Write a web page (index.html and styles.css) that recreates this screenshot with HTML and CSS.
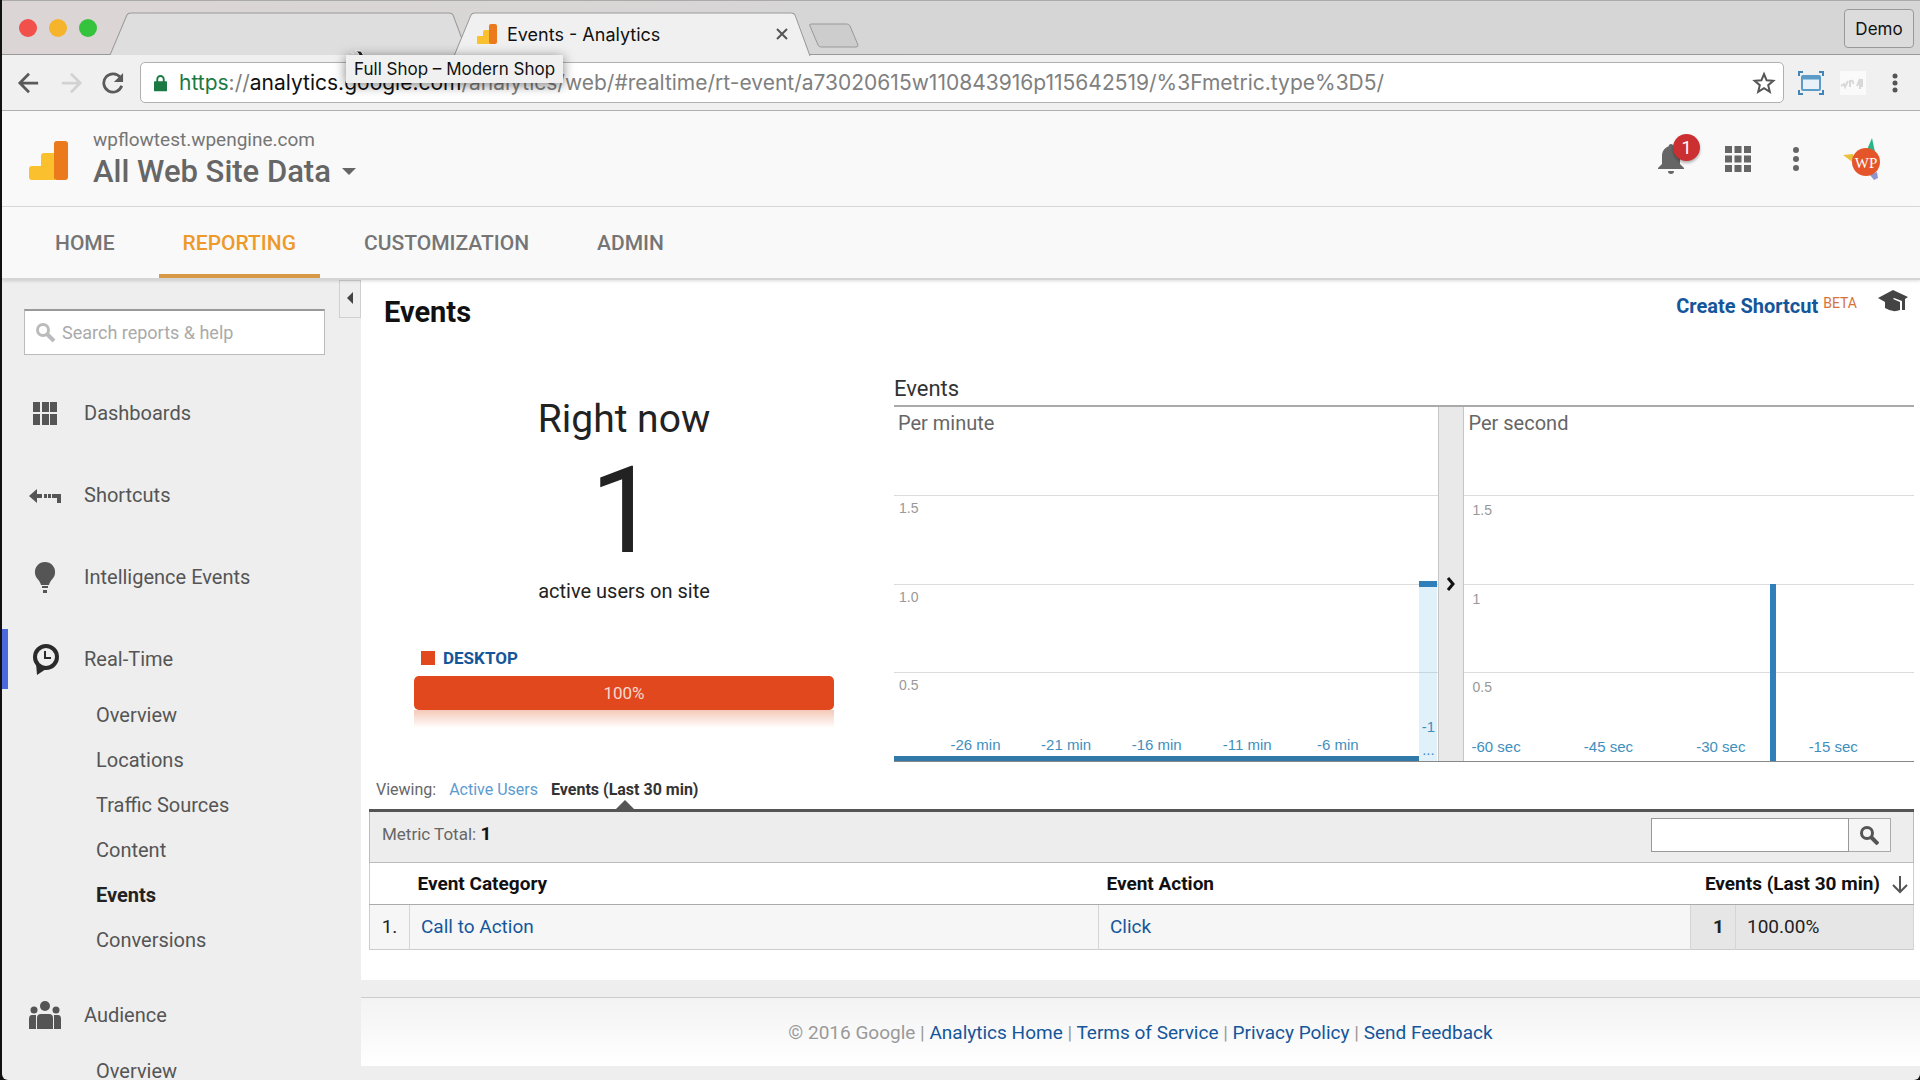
FILE: index.html
```html
<!DOCTYPE html>
<html lang="en">
<head>
  <meta charset="UTF-8">
  <meta name="viewport" content="width=device-width, initial-scale=1.0">
  <title>Events - Analytics</title>
  <link rel="stylesheet" href="styles.css">
</head>
<body>
  <div class="window">

    <!-- Tab Strip -->
    <div class="tab-strip">
      <div class="lights">
        <span class="light red"></span>
        <span class="light yellow"></span>
        <span class="light green"></span>
      </div>
      <div class="tab tab-back">
        <svg class="tab-shape" viewBox="0 0 360 42" preserveAspectRatio="none"><path d="M0 42 L17 3 Q18 1 21 1 H341 Q344 1 345 3 L360 42" fill="#dedede" stroke="#999"/></svg>
      </div>
      <div class="tab tab-active">
        <svg class="tab-shape" viewBox="0 0 360 42" preserveAspectRatio="none"><path d="M0 42 L17 3 Q18 1 21 1 H339 Q342 1 343 3 L358 42" fill="#f0f0f0" stroke="#999"/></svg>
        <svg class="tab-icon" viewBox="0 0 20 20"><path d="M0 13a1 1 0 0 1 1-1h5V8a2 2 0 0 1 2-2h5v14H1a1 1 0 0 1-1-1z" fill="#fbc02d"/><rect x="12" width="8" height="20" rx="2" fill="#ea7a1c"/></svg>
        <span class="tab-title">Events - Analytics</span>
        <button class="tab-close" aria-label="Close tab">
          <svg viewBox="0 0 12 12" width="12" height="12"><path d="M1 1l10 10M11 1L1 11" stroke="#555" stroke-width="2"/></svg>
        </button>
      </div>
      <button class="new-tab" aria-label="New tab">
        <svg viewBox="0 0 50 25" width="50" height="25"><path d="M2 1H38Q40 1 41 3L49 22Q49 24 47 24H12Q10 24 9 22L1 3Q0 1 2 1z" fill="#cdcdcd" stroke="#999"/></svg>
      </button>
      <button class="profile">Demo</button>
      <svg class="cursor" viewBox="0 0 16 8" width="16" height="8"><path d="M1 2l3 2M5 1l3 2 2 4 4-1-3-5z" fill="#222" stroke="#fff"/></svg>
      <div class="tooltip">Full Shop – Modern Shop</div>
    </div>

    <!-- Toolbar -->
    <div class="toolbar">
      <button class="tool" aria-label="Back"><svg viewBox="0 0 24 24"><path d="M22 12H3M12 2L2 12l10 10" fill="none" stroke="#5a5a5a" stroke-width="3"/></svg></button>
      <button class="tool" aria-label="Forward"><svg viewBox="0 0 24 24"><path d="M2 12h19M12 2l10 10-10 10" fill="none" stroke="#d2d2d2" stroke-width="3"/></svg></button>
      <button class="tool" aria-label="Reload"><svg viewBox="0 0 24 24"><path d="M20 6A10 10 0 1 0 21.500 15" fill="none" stroke="#5a5a5a" stroke-width="3"/><path d="M23 1v10H13z" fill="#5a5a5a"/></svg></button>
      <div class="omnibox">
        <svg class="lock" viewBox="0 0 14 18"><path d="M3.500 8V5a3.500 3.500 0 0 1 7 0v3" fill="none" stroke="#1b7a43" stroke-width="2"/><rect y="7" width="14" height="11" rx="1" fill="#1b7a43"/></svg>
        <div class="url" role="textbox" aria-label="Address" contenteditable="true" spellcheck="false"><span class="scheme">https</span>://<span class="host">analytics.google.com</span>/analytics/web/#realtime/rt-event/a73020615w110843916p115642519/%3Fmetric.type%3D5/</div>
        <button class="star" aria-label="Bookmark"><svg viewBox="0 0 24 24" width="24" height="24"><path d="M12 3l2.600 6.300 6.700.5-5.100 4.400 1.600 6.600L12 17.200l-5.800 3.600 1.600-6.600-5.100-4.400 6.700-.5z" fill="none" stroke="#555" stroke-width="2"/></svg></button>
      </div>
      <button class="ext" aria-label="Capture"><svg viewBox="0 0 26 24"><rect x="4" y="5" width="18" height="14" rx="1" fill="#e8f1f8" stroke="#5b9bc8" stroke-width="2"/><path d="M4 7h18" stroke="#5b9bc8" stroke-width="3"/><path d="M1 5V1h4M21 1h4v4M25 19v4h-4M5 23H1v-4" fill="none" stroke="#4585b5" stroke-width="2"/></svg></button>
      <button class="ext" aria-label="Extension"><svg viewBox="0 0 26 24"><rect width="26" height="24" fill="#fafafa"/><path d="M1 15l3-2 1 3 3-6M10 16v-6q4-1 3 3M17 15l3-7v10M22 8v8" fill="none" stroke="#d8d8d8" stroke-width="2"/></svg></button>
      <button class="menu" aria-label="Menu"><svg viewBox="0 0 6 20" width="6" height="20"><g fill="#555"><circle cx="3" cy="3" r="2.500"/><circle cx="3" cy="10" r="2.500"/><circle cx="3" cy="17" r="2.500"/></g></svg></button>
    </div>

    <!-- Analytics Header -->
    <header class="header">
      <svg class="logo" viewBox="0 0 39 39"><path d="M0 28a3 3 0 0 1 3-3h9V15a3 3 0 0 1 3-3h11v27H3a3 3 0 0 1-3-3z" fill="#fbc02d"/><rect x="25" width="14" height="39" rx="3" fill="#ea7a1c"/></svg>
      <div class="property">
        <div class="property-site">wpflowtest.wpengine.com</div>
        <button class="property-view">All Web Site Data <span class="caret"></span></button>
      </div>
      <div class="header-icons">
        <button class="bell" aria-label="Notifications">
          <svg viewBox="0 0 26 30" width="26" height="30"><path d="M13 0c1.500 0 2.300 1 2.300 2.300C20 4 22 8 22 12v8l4 4v1H0v-1l4-4v-8c0-4 2-8 6.700-9.700C10.700 1 11.500 0 13 0zM10 27h6a3 3 0 0 1-6 0z" fill="#666"/></svg>
          <span class="badge">1</span>
        </button>
        <button aria-label="Apps"><svg viewBox="0 0 26 26" width="26" height="26"><path d="M0 0h7v7H0zM9.500 0h7v7h-7zM19 0h7v7h-7zM0 9.500h7v7H0zM9.500 9.500h7v7h-7zM19 9.500h7v7h-7zM0 19h7v7H0zM9.500 19h7v7h-7zM19 19h7v7h-7z" fill="#666"/></svg></button>
        <button aria-label="More"><svg viewBox="0 0 8 26" width="8" height="26"><g fill="#666"><circle cx="4" cy="4" r="3"/><circle cx="4" cy="13" r="3"/><circle cx="4" cy="22" r="3"/></g></svg></button>
        <button class="avatar" aria-label="Account">
          <svg viewBox="0 0 40 44" width="40" height="44"><path d="M31 1l3 14h-9z" fill="#2bb58b"/><path d="M2 18l10-1 2 10z" fill="#e9c13c"/><path d="M29 38l7-3 1 6-4 2z" fill="#8c97cf"/><circle cx="25" cy="25" r="14" fill="#e5552a"/><text x="25" y="31" text-anchor="middle" class="avatar-text">WP</text></svg>
        </button>
      </div>
    </header>

    <!-- Main Navigation -->
    <nav class="main-nav">
      <a href="#">HOME</a>
      <a href="#" class="active">REPORTING</a>
      <a href="#">CUSTOMIZATION</a>
      <a href="#">ADMIN</a>
    </nav>

    <div class="body">
      <!-- Sidebar -->
      <aside class="sidebar">
        <button class="collapse" aria-label="Collapse"><span></span></button>
        <label class="side-search">
          <svg viewBox="0 0 20 20" width="20" height="20"><circle cx="7" cy="7" r="5.500" fill="none" stroke="#bbb" stroke-width="3"/><path d="M11 11l7 7" stroke="#bbb" stroke-width="4"/></svg>
          <input type="text" placeholder="Search reports &amp; help" aria-label="Search reports &amp; help">
        </label>
        <a href="#" class="side-item">
          <svg viewBox="0 0 32 32"><path d="M4 5h7v10H4zM13 5h7v10h-7zM21 5h7v10h-7zM4 17h7v11H4zM13 17h7v11h-7zM21 17h7v11h-7z" fill="#555"/></svg>
          Dashboards
        </a>
        <a href="#" class="side-item">
          <svg viewBox="0 0 32 32"><path d="M0 17l8-7v5h5v4H8v5zM15 15h3v4h-3zM19 15h3v4h-3zM23 15h9v9h-4v-5h-5z" fill="#555"/></svg>
          Shortcuts
        </a>
        <a href="#" class="side-item">
          <svg viewBox="0 0 32 32"><path d="M16 1a10 10 0 0 1 10 11c0 5-5 7-6 12h-8c-1-5-6-7-6-12A10 10 0 0 1 16 1zM13 25h6v2h-6zM14 29h4v3h-4z" fill="#555"/></svg>
          Intelligence Events
        </a>
        <a href="#" class="side-item current">
          <svg viewBox="0 0 32 32"><circle cx="17" cy="14" r="11" fill="none" stroke="#2a2a2a" stroke-width="4"/><path d="M7 20l1 12 9-6z" fill="#2a2a2a"/><path d="M16 8v7h6" fill="none" stroke="#2a2a2a" stroke-width="2"/></svg>
          Real-Time
        </a>
        <div class="side-sub">
          <a href="#">Overview</a>
          <a href="#">Locations</a>
          <a href="#">Traffic Sources</a>
          <a href="#">Content</a>
          <a href="#" class="selected">Events</a>
          <a href="#">Conversions</a>
        </div>
        <a href="#" class="side-item">
          <svg viewBox="0 0 32 32"><g fill="#555"><circle cx="16" cy="7" r="5"/><circle cx="5" cy="11" r="3.500"/><circle cx="27" cy="11" r="3.500"/><path d="M8 30V19q0-4 4-4h8q4 0 4 4v11zM0 30V20q0-4 3-4h4v14zM25 30V16h4q3 0 3 4v10z"/></g></svg>
          Audience
        </a>
        <div class="side-sub">
          <a href="#">Overview</a>
        </div>
      </aside>

      <!-- Report -->
      <main class="main">
        <div class="report">
          <div class="report-head">
            <h1>Events</h1>
            <div class="report-tools">
              <a href="#" class="shortcut">Create Shortcut</a>
              <span class="beta">BETA</span>
              <svg class="cap" viewBox="0 0 30 22" width="30" height="22"><path d="M0 8L15 0l15 7-3 2v11h-3v-9l-8-3-1 1 7 3v8q-7 3-15-2v-6z" fill="#444"/></svg>
            </div>
          </div>

          <div class="overview">
            <div class="right-now">
              <h2>Right now</h2>
              <div class="count">1</div>
              <p>active users on site</p>
              <div class="legend"><span class="swatch"></span><a href="#">DESKTOP</a></div>
              <div class="device-bar">100%</div>
              <div class="reflection"></div>
            </div>

            <div class="charts">
              <h3>Events</h3>
              <div class="chart-row">
                <div class="chart">
                  <div class="band"><span class="chart-name">Per minute</span></div>
                  <div class="band"><span class="tick">1.5</span></div>
                  <div class="band"><span class="tick">1.0</span></div>
                  <div class="band"><span class="tick">0.5</span></div>
                  <div class="minutes">
                    <div class="zero-line"></div>
                    <div class="minute-bar"><span>-1</span><span>...</span></div>
                    <span class="min-label">-26 min</span>
                    <span class="min-label">-21 min</span>
                    <span class="min-label">-16 min</span>
                    <span class="min-label">-11 min</span>
                    <span class="min-label">-6 min</span>
                  </div>
                </div>
                <button class="divider" aria-label="Expand">
                  <svg viewBox="0 0 10 14" width="10" height="14"><path d="M2 1l5 6-5 6" fill="none" stroke="#111" stroke-width="3"/></svg>
                </button>
                <div class="chart seconds-chart">
                  <div class="band"><span class="chart-name">Per second</span></div>
                  <div class="band"><span class="tick">1.5</span></div>
                  <div class="band"><span class="tick">1</span></div>
                  <div class="band"><span class="tick">0.5</span></div>
                  <div class="seconds">
                    <span>-60 sec</span>
                    <span>-45 sec</span>
                    <span>-30 sec</span>
                    <span>-15 sec</span>
                  </div>
                  <div class="second-bar" style="left: 68%; height: 50%"></div>
                </div>
              </div>
            </div>
          </div>

          <div class="viewing">
            <span>Viewing:</span>
            <a href="#">Active Users</a>
            <strong>Events (Last 30 min)</strong>
          </div>
          <div class="metric">
            <div class="metric-total">Metric Total: <strong>1</strong></div>
            <div class="metric-search">
              <input type="text" aria-label="Search table">
              <button aria-label="Search"><svg viewBox="0 0 20 20" width="20" height="20"><circle cx="8" cy="8" r="5.500" fill="none" stroke="#555" stroke-width="3"/><path d="M12 12l7 7" stroke="#555" stroke-width="4"/></svg></button>
            </div>
          </div>
          <table class="data">
            <colgroup><col class="c-num"><col class="c-cat"><col class="c-act"><col class="c-val"><col class="c-pct"></colgroup>
            <thead>
              <tr>
                <th></th>
                <th>Event Category</th>
                <th>Event Action</th>
                <th colspan="2" class="sorted">Events (Last 30 min)<svg viewBox="0 0 16 18" width="16" height="18"><path d="M8 0v16M1 9l7 7 7-7" fill="none" stroke="#555" stroke-width="2"/></svg></th>
              </tr>
            </thead>
            <tbody>
              <tr>
                <td class="num">1.</td>
                <td><a href="#">Call to Action</a></td>
                <td><a href="#">Click</a></td>
                <td class="val">1</td>
                <td class="pct">100.00%</td>
              </tr>
            </tbody>
          </table>
        </div>

        <footer class="footer">
          © 2016 Google | <a href="#">Analytics Home</a> | <a href="#">Terms of Service</a> | <a href="#">Privacy Policy</a> | <a href="#">Send Feedback</a>
        </footer>
      </main>
    </div>
  </div>
</body>
</html>
```
FILE: styles.css
```css
/* General Styles */
* {
  box-sizing: border-box;
}

body {
  margin: 0;
  background: #111;
  font-family: Roboto, "Liberation Sans", sans-serif;
  font-size: 20px;
  color: #222;
}

a {
  color: #15569a;
  text-decoration: none;
}

button {
  padding: 0;
  border: none;
  background: none;
  font-family: inherit;
  color: inherit;
  cursor: pointer;
}

svg {
  display: block;
}

h1, h2, h3, p {
  margin: 0;
}

.window {
  display: flex;
  flex-direction: column;
  height: 100vh;
  margin-left: 2px;
  overflow: hidden;
  background: #eee;
  border-radius: 0 0 6px 6px;
}

/* Tab Strip */
.tab-strip {
  position: relative;
  display: flex;
  flex: none;
  height: 55px;
  padding: 11px 6px 0 17px;
  background: linear-gradient(90deg, #dcd5d5, #d6d6d6 50%);
  border-top: 1px solid #aaa;
  border-bottom: 1px solid #999;
}

.lights {
  display: flex;
  gap: 12px;
  width: 91px;
  padding-top: 7px;
}

.light {
  width: 18px;
  height: 18px;
  border-radius: 50%;
}

.red {
  background: #f2504b;
}

.yellow {
  background: #f6b42c;
}

.green {
  background: #35c23c;
}

.tab {
  position: relative;
  display: flex;
  align-items: center;
  width: 358px;
  height: 43px;
  font: 18px Inter, Roboto, sans-serif;
}

.tab-shape {
  position: absolute;
  top: 0;
  left: 0;
  width: 100%;
  height: 100%;
}

.tab-active {
  height: 44px;
  margin-left: -14px;
  padding: 0 20px 0 23px;
  gap: 10px;
}

.tab-icon,
.tab-title,
.tab-close {
  position: relative;
}

.tab-icon {
  width: 20px;
  height: 20px;
}

.tab-title {
  flex: 1;
  color: #111;
}

.tab-close {
  margin-right: 4px;
}

.new-tab {
  align-self: flex-start;
  margin: 11px auto 0 -3px;
}

.profile {
  width: 70px;
  height: 39px;
  margin-top: -3px;
  border: 1px solid #999;
  border-radius: 4px;
  background: #dcdcdc;
  font: 17px Inter, Roboto, sans-serif;
  color: #111;
}

.cursor {
  position: absolute;
  top: 49px;
  left: 348px;
}

.tooltip {
  position: absolute;
  top: 54px;
  left: 344px;
  padding: 0 8px;
  background: #f0f0f0;
  box-shadow: 0 2px 12px rgba(0, 0, 0, 0.5);
  font: 17px/28px Inter, Roboto, sans-serif;
  color: #111;
  z-index: 2;
}

/* Toolbar */
.toolbar {
  display: flex;
  flex: none;
  align-items: center;
  height: 56px;
  padding: 0 22px 0 15px;
  background: #f0f0f0;
  border-bottom: 1px solid #b0b0b0;
}

.tool {
  margin-right: 18px;
}

.tool svg {
  width: 24px;
  height: 22px;
}

.omnibox {
  display: flex;
  flex: 1;
  align-items: center;
  height: 41px;
  margin: 0 14px 0 -3px;
  padding: 0 7px 0 13px;
  background: #fff;
  border: 1px solid #b0b0b0;
  border-radius: 5px;
}

.lock {
  width: 13px;
  height: 18px;
}

.url {
  flex: 1;
  margin-left: 12px;
  font: 21px Inter, Roboto, sans-serif;
  color: #808080;
  white-space: nowrap;
  outline: none;
}

.scheme {
  color: #1b7a43;
}

.host {
  color: #111;
}

.ext {
  margin-right: 16px;
}

.ext svg {
  width: 26px;
  height: 24px;
}

.menu {
  margin-left: 10px;
}

/* Header */
.header {
  display: flex;
  flex: none;
  align-items: center;
  height: 96px;
  padding: 0 39px 0 27px;
  background: #f9f9f9;
  border-bottom: 1px solid #ddd;
}

.logo {
  width: 39px;
  height: 39px;
  margin-top: 4px;
}

.property {
  margin-left: 25px;
  color: #757575;
}

.property-site {
  font-size: 19px;
  line-height: 26px;
}

.property-view {
  display: flex;
  align-items: center;
  gap: 11px;
  font-size: 31px;
  font-weight: 500;
  line-height: 37px;
  color: #666;
}

.caret {
  border: 7px solid transparent;
  border-top-color: #666;
  border-bottom: none;
}

.header-icons {
  display: flex;
  align-items: center;
  margin-left: auto;
  gap: 41px;
}

.bell {
  position: relative;
}

.badge {
  position: absolute;
  top: -10px;
  left: 15px;
  width: 27px;
  height: 27px;
  border-radius: 50%;
  background: #cc2f31;
  box-shadow: 0 2px 3px rgba(0, 0, 0, 0.3);
  color: #fff;
  font-size: 18px;
  line-height: 27px;
}

.avatar-text {
  fill: #fff;
  font: 15px "Liberation Serif", serif;
}

/* Main Navigation */
.main-nav {
  position: relative;
  display: flex;
  flex: none;
  gap: 20px;
  height: 73px;
  padding-left: 29px;
  background: #f9f9f9;
  border-bottom: 2px solid #d5d5d5;
  box-shadow: 0 1px 3px rgba(0, 0, 0, 0.15);
  z-index: 1;
}

.main-nav a {
  padding: 0 24px;
  color: #757575;
  font-size: 21px;
  font-weight: 500;
  line-height: 73px;
}

.main-nav .active {
  height: 71px;
  color: #ed9a2b;
  border-bottom: 4px solid #d79b48;
}

.body {
  display: flex;
  flex: 1;
  min-height: 0;
}

/* Sidebar */
.sidebar {
  position: relative;
  flex: none;
  width: 359px;
  padding-top: 29px;
}

.collapse {
  position: absolute;
  top: 0;
  right: 0;
  width: 22px;
  height: 38px;
  border: 1px solid #d0d0d0;
}

.collapse span {
  display: inline-block;
  border: 6px solid transparent;
  border-right-color: #444;
  border-left: none;
}

.side-search {
  display: flex;
  align-items: center;
  gap: 6px;
  height: 46px;
  margin: 0 36px 28px 22px;
  padding-left: 11px;
  background: #fff;
  border: 1px solid #bbb;
  border-top: 2px solid #999;
}

.side-search input {
  flex: 1;
  min-width: 0;
  padding: 0;
  border: none;
  outline: none;
  font: 18px Roboto, sans-serif;
}

.side-search input::placeholder {
  color: #aaa;
}

.side-item {
  display: flex;
  align-items: center;
  gap: 23px;
  height: 60px;
  margin-bottom: 22px;
  padding-left: 27px;
  color: #555;
}

.side-item svg {
  width: 32px;
  height: 32px;
}

.current {
  margin-bottom: 4px;
  padding-left: 21px;
  border-left: 6px solid #4a69dd;
}

.side-sub {
  display: flex;
  flex-direction: column;
  margin-bottom: 22px;
  padding-left: 94px;
}

.side-sub a {
  line-height: 45px;
  color: #555;
}

.side-sub .selected {
  color: #222;
  font-weight: 700;
}

.side-item + .side-sub:last-child {
  margin-top: -18px;
}

/* Report */
.main {
  flex: 1;
  min-width: 0;
}

.report {
  padding: 0 6px 30px 8px;
  background: #fff;
}

.report-head {
  display: flex;
  justify-content: space-between;
  height: 93px;
  padding: 10px 6px 0 15px;
}

h1 {
  font-size: 29px;
  line-height: 44px;
  color: #111;
}

.report-tools {
  display: flex;
  gap: 5px;
}

.shortcut {
  font-weight: 700;
  line-height: 32px;
}

.beta {
  color: #d5713a;
  font-size: 14px;
  line-height: 26px;
}

.cap {
  margin-left: 16px;
}

.overview {
  display: flex;
  height: 389px;
}

/* Right Now */
.right-now {
  width: 420px;
  margin: 23px 60px 0 45px;
  text-align: center;
}

.right-now h2 {
  font-size: 39px;
  font-weight: 400;
  line-height: 46px;
}

.count {
  font-size: 120px;
  line-height: 138px;
}

.right-now p {
  line-height: 22px;
}

.legend {
  display: flex;
  align-items: center;
  gap: 8px;
  margin: 44px 0 6px 7px;
  font-size: 17px;
  font-weight: 700;
  line-height: 24px;
}

.swatch {
  width: 14px;
  height: 14px;
  background: #e2481e;
}

.device-bar {
  border-radius: 5px;
  background: #e2481e;
  color: #f7d9cf;
  font-size: 17px;
  line-height: 34px;
}

.reflection {
  height: 18px;
  background: linear-gradient(#f5c8b8, #fff);
}

/* Charts */
.charts {
  display: flex;
  flex: 1;
  flex-direction: column;
}

.charts h3 {
  font-size: 22px;
  font-weight: 400;
  line-height: 32px;
  color: #333;
  border-bottom: 2px solid #aaa;
}

.chart-row {
  display: flex;
  flex: 1;
  border-bottom: 1px solid #888;
}

.chart {
  position: relative;
  display: flex;
  flex: 545;
  flex-direction: column;
}

.seconds-chart {
  flex: 450;
}

.band {
  flex: 1;
  border-bottom: 1px solid #ddd;
}

.band:nth-child(4) {
  border-bottom: none;
}

.chart-name {
  padding-left: 4px;
  color: #666;
  line-height: 32px;
}

.tick {
  display: block;
  padding-left: 5px;
  color: #999;
  font: 14px/24px "Liberation Sans", Arial, sans-serif;
}

.seconds-chart .tick {
  padding-left: 8px;
  line-height: 28px;
}

/* One column for each of the last 30 minutes */
.minutes {
  position: absolute;
  inset: 0 1px 0 0;
  display: grid;
  grid-template-columns: repeat(30, 1fr);
  grid-template-rows: 1fr 1fr;
  color: #3f8fbe;
  font: 15px "Liberation Sans", Arial, sans-serif;
}

.zero-line {
  grid-area: 2 / 1 / 3 / 30;
  align-self: end;
  height: 5px;
  background: #3079a8;
}

.minute-bar {
  display: flex;
  grid-area: 2 / 30;
  flex-direction: column;
  justify-content: flex-end;
  margin-top: -3px;
  background: rgba(120, 190, 230, 0.22);
  border-top: 6px solid #2e7fba;
  line-height: 23px;
  text-align: center;
}

.min-label {
  grid-row: 2;
  grid-column-end: span 5;
  align-self: end;
  padding-bottom: 8px;
  text-align: center;
}

.min-label:nth-child(3) {
  grid-column-start: 3;
}

.min-label:nth-child(4) {
  grid-column-start: 8;
}

.min-label:nth-child(5) {
  grid-column-start: 13;
}

.min-label:nth-child(6) {
  grid-column-start: 18;
}

.min-label:nth-child(7) {
  grid-column-start: 23;
}

.divider {
  display: flex;
  align-items: center;
  justify-content: center;
  width: 26px;
  background: #e9e9e9;
  border: solid #c5c5c5;
  border-width: 0 1px;
}

.seconds {
  position: absolute;
  bottom: 6px;
  left: 0;
  display: flex;
  width: 100%;
  color: #3f8fbe;
  font: 15px "Liberation Sans", Arial, sans-serif;
}

.seconds span {
  flex: 1;
  padding-left: 7px;
}

.second-bar {
  position: absolute;
  bottom: 0;
  width: 6px;
  background: #2e7fba;
}

/* Viewing */
.viewing {
  display: flex;
  gap: 13px;
  height: 50px;
  padding: 16px 0 0 7px;
  border-bottom: 3px solid #555;
  color: #666;
  font-size: 16px;
  line-height: 24px;
}

.viewing a {
  color: #5c9bd0;
}

.viewing strong {
  position: relative;
  color: #333;
}

.viewing strong::after {
  content: "";
  position: absolute;
  bottom: 0;
  left: 50%;
  margin-left: -9px;
  border: 9px solid transparent;
  border-bottom-color: #555;
  border-top: none;
}

/* Table */
.metric {
  display: flex;
  justify-content: space-between;
  height: 51px;
  padding: 6px 22px 0 12px;
  background: #ededed;
  border: 1px solid #bbb;
  border-top: none;
}

.metric-total {
  color: #666;
  font-size: 17px;
  line-height: 32px;
}

.metric-total strong {
  color: #111;
  font-size: 19px;
}

.metric-search {
  display: flex;
}

.metric-search input {
  width: 198px;
  height: 34px;
  border: 1px solid #999;
}

.metric-search button {
  width: 42px;
  height: 34px;
  padding-left: 10px;
  background: #f5f5f5;
  border: 1px solid #aaa;
  border-left: none;
}

.data {
  width: 100%;
  border: 1px solid #ccc;
  border-top: none;
  border-collapse: collapse;
  table-layout: fixed;
  font-size: 19px;
}

.c-num {
  width: 40px;
}

.c-cat {
  width: 689px;
}

.c-val {
  width: 45px;
}

.c-pct {
  width: 178px;
}

.data th {
  height: 41px;
  padding: 0 8px;
  border-bottom: 1px solid #aaa;
  color: #111;
  text-align: left;
}

.data .sorted {
  padding: 0 5px 0 0;
  text-align: right;
}

.sorted svg {
  display: inline-block;
  margin-left: 12px;
  vertical-align: middle;
}

.data td {
  height: 45px;
  padding: 0 11px;
  background: #f6f6f6;
  border-right: 1px solid #d5d5d5;
}

.data .num {
  padding: 0;
  text-align: center;
}

.data .val,
.data .pct {
  background: #e6e6e6;
}

.data .val {
  font-weight: 700;
  text-align: right;
}

/* Footer */
.footer {
  height: 69px;
  margin-top: 17px;
  background: linear-gradient(#f3f3f3, #fff);
  border-top: 1px solid #ccc;
  color: #999;
  font-size: 19px;
  line-height: 69px;
  text-align: center;
}
```
